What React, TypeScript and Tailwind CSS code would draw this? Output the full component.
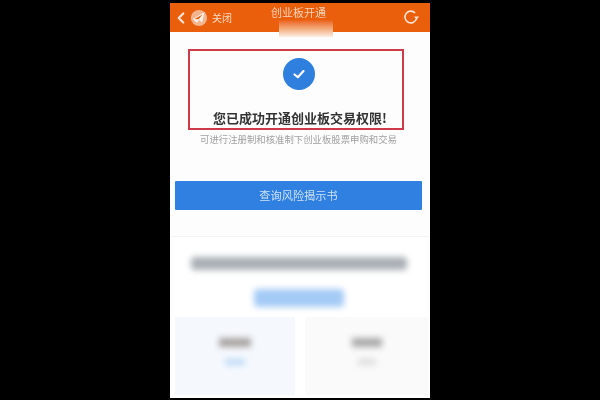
import React from 'react';
import { ChevronLeft } from 'lucide-react';

const cjk = { fontFamily: '"Noto Sans CJK SC", "Liberation Sans", sans-serif' };

export default function App() {
  return (
    <div className="w-[600px] h-[400px] bg-black flex justify-center pt-[3px] pb-[2px] overflow-hidden" style={cjk}>
      <div className="w-[260px] flex flex-col bg-[#fdfdfd] overflow-hidden">
        {/* Header */}
        <div className="h-[29px] shrink-0 bg-[#ea5f0c] relative flex items-center px-[3px] text-white">
          <div className="flex items-center blur-[0.6px]">
            <ChevronLeft className="w-[18px] h-[18px] -ml-[1px] text-[#fbe3d4]" strokeWidth={3} />
            <svg viewBox="0 0 20 20" className="w-[18px] h-[18px]">
              <circle cx="10" cy="10" r="9" fill="#f3b48e" />
              <path d="M3 11 L16 3.5 L13.5 15 L10 12 L8 15.5 Z" fill="#fdf2ea" />
              <path d="M5 11 L14 6 L9.5 11.5 Z" fill="#ea5f0c" />
            </svg>
            <span className="text-[10px] ml-[4px] text-[#fbdcc8] leading-none">关闭</span>
          </div>
          <span className="absolute left-[101px] top-[2px] text-[11px] leading-[14px] text-[#f9d3bc] blur-[0.6px]">创业板开通</span>
          <div className="absolute left-[109px] top-[17px] w-[54px] h-[17px] bg-gradient-to-b from-[#ea5f0c] via-[#f2a878] to-[#fbeee5] blur-[0.6px]" />
          <svg viewBox="0 0 20 20" className="absolute right-[10px] top-[5px] w-[18px] h-[18px] blur-[0.4px]" fill="none" stroke="#fde3d2" strokeWidth="1.8">
            <path d="M14.5 5.5 A6.5 6.5 0 1 0 16 12" />
            <path d="M13.5 9.5 L19 9.5 L16.2 13 Z" fill="#fde3d2" stroke="none" />
          </svg>
        </div>

        {/* Result */}
        <div className="mt-[17px] ml-[18px] mr-[26px] h-[81px] shrink-0 border-2 border-[#cf3a4a] flex flex-col items-center pt-[7px] pl-[8px]">
          <div className="w-[32px] h-[32px] rounded-full bg-[#2f7fde] flex items-center justify-center blur-[0.3px] -ml-[2px]">
            <svg viewBox="0 0 16 16" className="w-[16px] h-[16px]" fill="none" stroke="#fff" strokeWidth="2.2" strokeLinecap="round" strokeLinejoin="round">
              <path d="M3.5 8.5 L6.8 11.2 L12.5 5" />
            </svg>
          </div>
          <p className="mt-[19px] text-[13px] leading-[18px] font-bold text-[#333] whitespace-nowrap blur-[0.5px]">您已成功开通创业板交易权限!</p>
        </div>
        <p className="mt-[2px] pr-[3px] text-center text-[9.4px] leading-[14px] text-[#a0a0a0] whitespace-nowrap blur-[0.5px]">可进行注册制和核准制下创业板股票申购和交易</p>

        <button className="mt-[35px] ml-[5px] mr-[8px] h-[29px] shrink-0 bg-[#2f80e0] text-[#cfe2f8] text-[11.2px] rounded-[1px] blur-[0.4px]">查询风险揭示书</button>

        {/* Blurred card */}
        <div className="mt-[26px] mx-[2px] flex-1 border-t border-[#f3f3f3] bg-white flex flex-col items-center">
          <div className="mt-[20px] -ml-[3px] w-[216px] h-[13px] bg-[#a9afb5] rounded-sm blur-[3px]" />
          <div className="mt-[19px] -ml-[3px] w-[90px] h-[18px] bg-[#a4caf6] rounded-sm blur-[3px]" />
          <div className="mt-[10px] w-full flex-1 flex gap-[10px] pl-[3px] pb-[3px]">
            <div className="w-[120px] bg-[#f5f9fe] flex flex-col items-center pt-[21px]">
              <div className="w-[32px] h-[9px] bg-[#a8a2a0] blur-[3px]" />
              <div className="mt-[12px] w-[20px] h-[6px] bg-[#bcd8f6] blur-[3px]" />
            </div>
            <div className="flex-1 bg-[#fafafa] flex flex-col items-center pt-[21px]">
              <div className="w-[30px] h-[9px] bg-[#a8a8a8] blur-[3px]" />
              <div className="mt-[12px] w-[18px] h-[6px] bg-[#dcdcdc] blur-[3px]" />
            </div>
          </div>
        </div>
      </div>
    </div>
  );
}
